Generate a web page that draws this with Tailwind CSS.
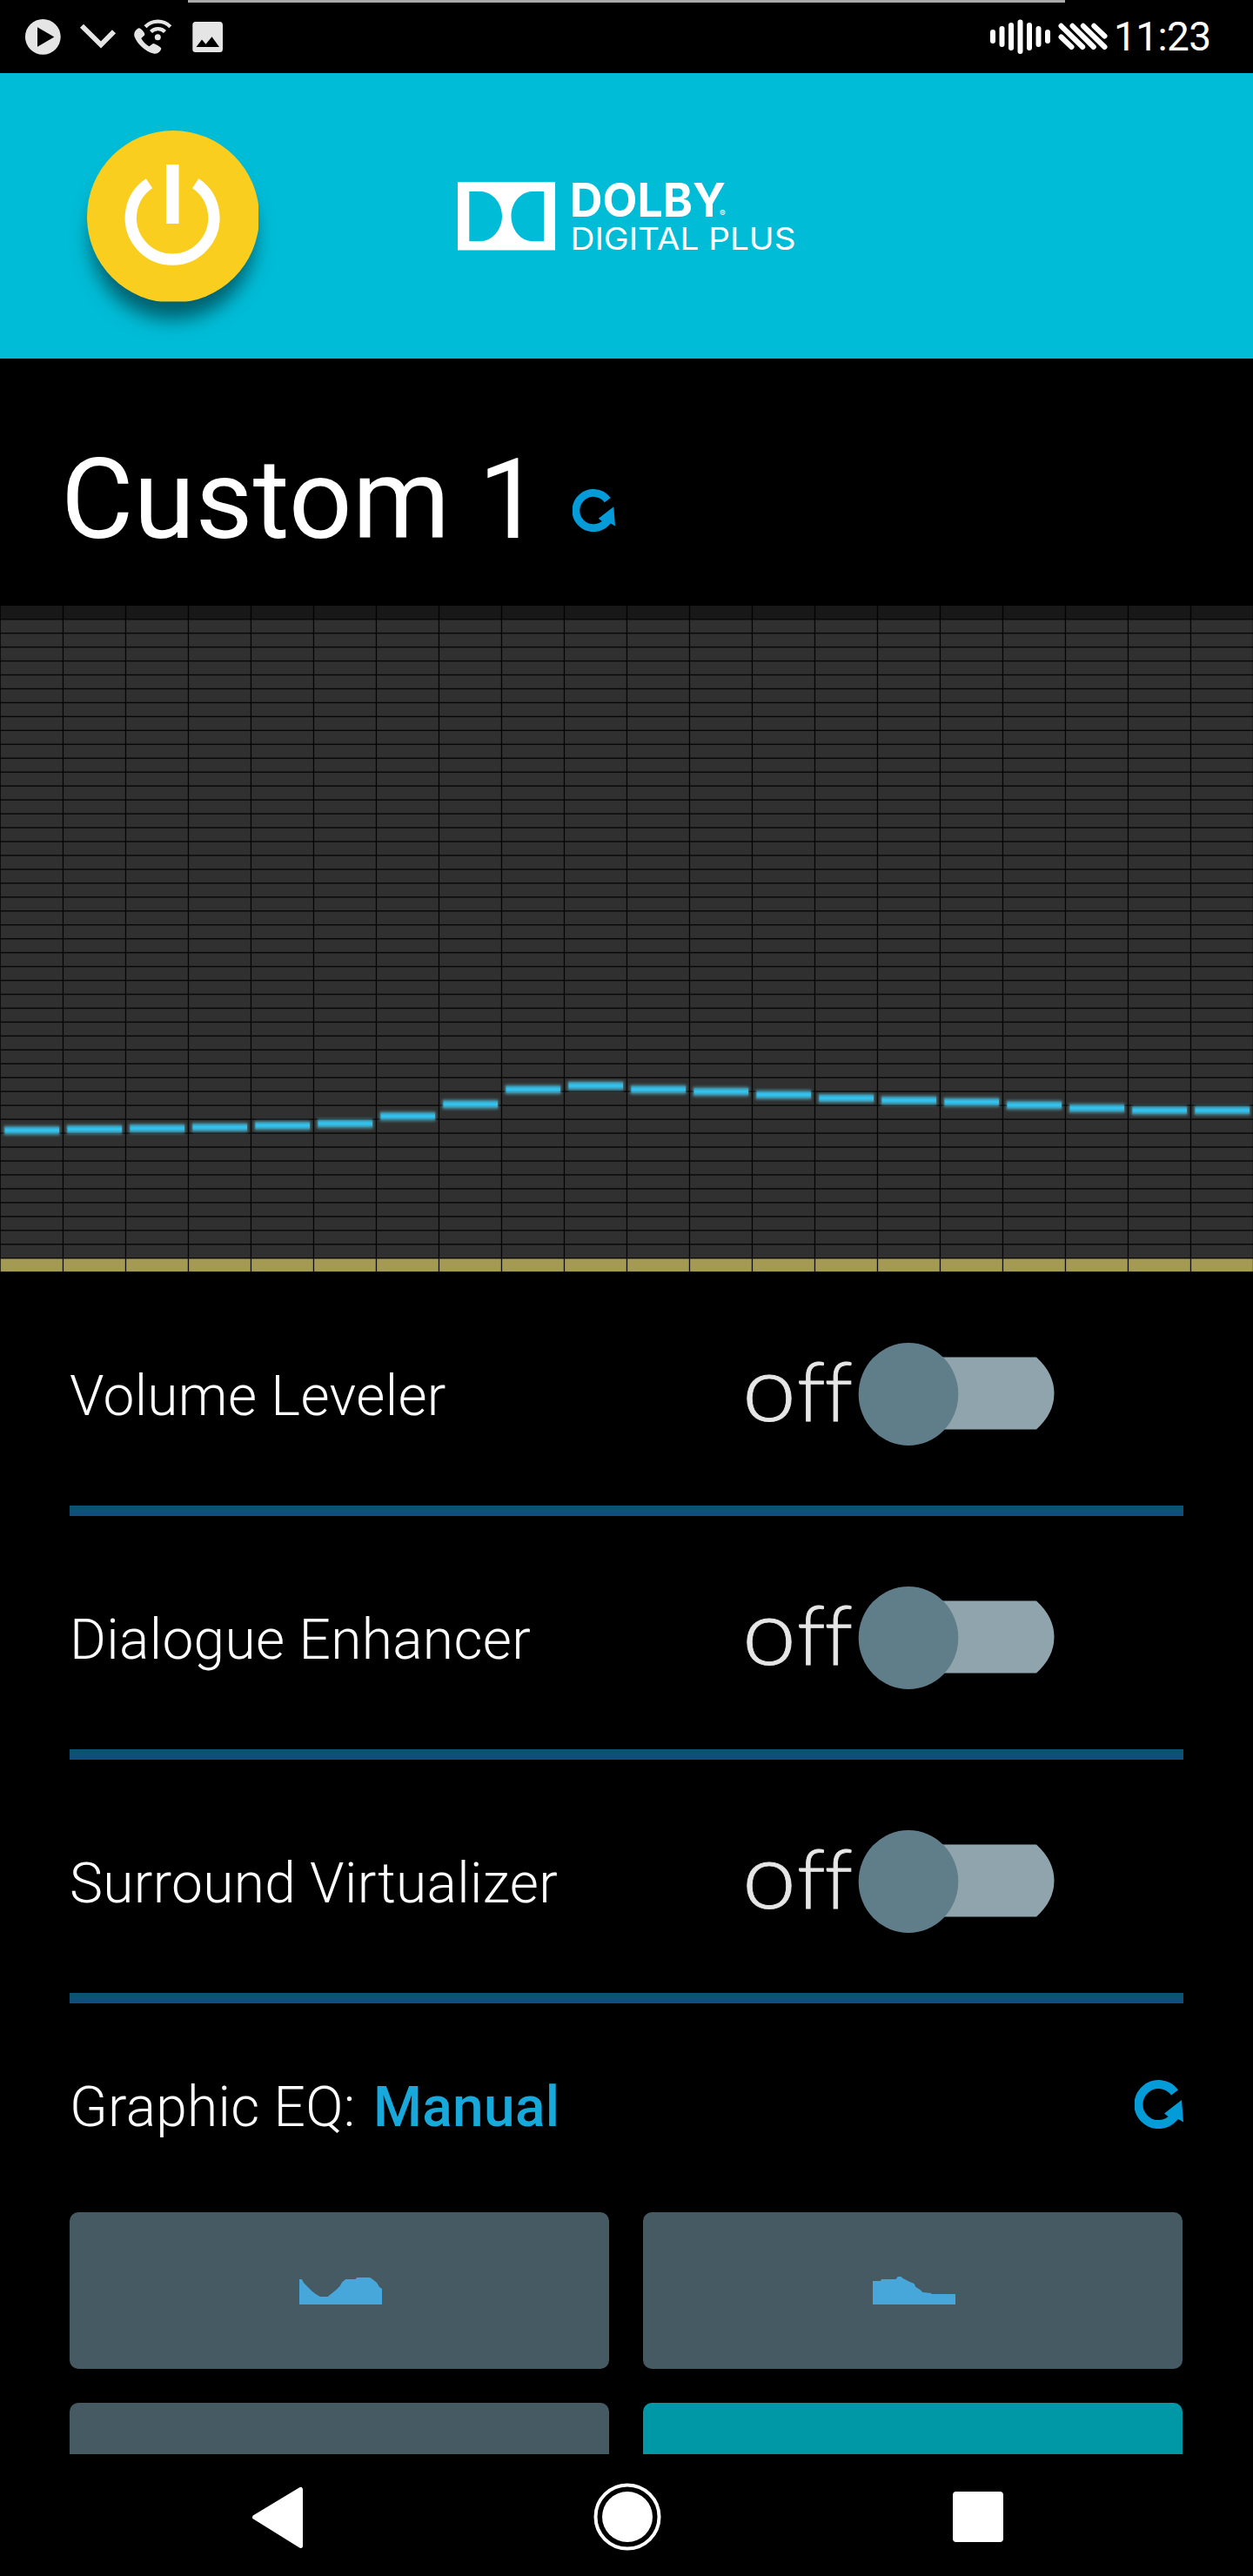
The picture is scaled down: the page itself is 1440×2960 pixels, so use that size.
<!DOCTYPE html>
<html lang="en">
<head>
<meta charset="utf-8">
<title>Dolby Digital Plus</title>
<script src="https://cdn.jsdelivr.net/npm/@tailwindcss/browser@4"></script>
</head>
<body class="bg-black">
<div class="flex h-[2960px] w-[1440px] flex-col overflow-hidden bg-black font-['Roboto',sans-serif] text-white">

  <!-- Status bar -->
  <header class="relative flex h-[84px] shrink-0 items-start justify-between">
    <div class="absolute top-0 left-[216px] h-[3px] w-[1008px] bg-[#a9a9a9]"></div>
    <svg class="h-[84px] w-[270px]" viewBox="0 0 270 84" fill="#e5e5e5">
      <circle cx="49.3" cy="42.3" r="20.4"/>
      <path d="M43 31.3 62.3 42.5 43 53.7Z" fill="#000"/>
      <path d="M94 29.7 116 51.5 131 36.2" fill="none" stroke="#e5e5e5" stroke-width="5.8"/>
      <path d="M159.5 32.3C155.5 34 153.5 38 154.5 42C157.500 50 167 59.500 176.500 61.500C181 62.500 185 59 185.300 55.500C185 54 178 49.700 176 49.900L171.500 53.200C168 51.500 164 47.500 162.300 44L166.300 40.300C167 38 162 32 159.500 32.300Z"/>
      <circle cx="181.300" cy="42.800" r="3.500"/>
      <path d="M173.500 36.500A11 11 0 0 1 189.500 36.500M167 30.800A20 20 0 0 1 195.800 30.800" fill="none" stroke="#e5e5e5" stroke-width="4.200"/>
      <rect x="221.300" y="25" width="34.700" height="35" rx="3.500"/>
      <path d="M225.500 54 232 45.500 236.500 50.800 243.500 42.300 252 54Z" fill="#000"/>
    </svg>
    <div class="flex pr-[49px]">
      <svg class="h-[84px] w-[144px]" viewBox="1134 0 144 84" fill="none" stroke="#fff" stroke-linecap="round" stroke-width="6">
        <path d="M1141 37V47M1151.500 33V51M1162 29V55M1172.500 25.500V59M1183 29V55M1193.500 33V51M1204 37V47"/>
        <path d="M1219.500 42.500 1231.500 54M1219.500 29.800 1244.200 54M1232.500 29.800 1256.800 54M1244.800 29.800 1269.500 54M1257.300 29.800 1269.500 41.500"/>
      </svg>
      <svg class="h-[84px] w-[113px] overflow-visible" viewBox="1278 0 113 84"><text x="1280" y="58.300" font-size="46" textLength="112" fill="#fff">11:23</text></svg>
    </div>
  </header>

  <!-- Brand bar -->
  <section class="h-[328px] shrink-0 bg-[#00bcd7]">
    <svg class="h-[328px] w-[1440px]" viewBox="0 84 1440 328">
      <defs>
        <filter id="shadow" x="-30%" y="-30%" width="160%" height="160%"><feGaussianBlur stdDeviation="11"/></filter>
        <clipPath id="button"><rect x="99" y="149" width="198" height="197.500"/></clipPath>
      </defs>
      <circle cx="198.500" cy="273" r="94" fill="#005f6c" filter="url(#shadow)"/>
      <circle cx="199" cy="249" r="99" fill="#f9ce1f" clip-path="url(#button)"/>
      <path d="M171.500 210.700A47.800 47.800 0 1 0 224.700 210.700" fill="none" stroke="#fff" stroke-width="13.300"/>
      <path d="M191 189H205.500V257H191Z" fill="#fff"/>
      <path fill="#fff" fill-rule="evenodd" d="M526 209.300H638V287.500H526ZM539.300 220V277.300H553C567 276 577 263 577 248.500S567 221 553 220ZM625 220V277.300H611C597 276 587.500 263 587.500 248.500S597 221 611 220Z"/>
      <g fill="#fff" font-family="Inter, sans-serif">
        <text x="655" y="249" font-size="53" font-weight="700" textLength="179" lengthAdjust="spacingAndGlyphs">DOLBY</text>
        <text x="827" y="249" font-size="10">®</text>
        <text x="655.500" y="287" font-size="36" font-weight="400" textLength="259" lengthAdjust="spacingAndGlyphs">DIGITAL PLUS</text>
      </g>
    </svg>
  </section>

  <!-- Profile title -->
  <section class="flex h-[284px] shrink-0 items-start pt-[98px] pl-[70px]">
    <h1 class="w-[588px] text-[128px] leading-none tracking-[0.3px] whitespace-nowrap">Custom 1</h1>
    <svg class="mt-[52px] h-[49px] w-[49px]" viewBox="0 0 56 56">
      <path d="M46 14.500A23 23 0 1 0 45 43" fill="none" stroke="#049bd9" stroke-width="10"/>
      <path d="M54 23 56 48.500 50 45 46 48 34 38.500Z" fill="#049bd9"/>
    </svg>
  </section>

  <!-- Equalizer curve -->
  <svg id="eq" class="h-[766px] w-[1440px] shrink-0" viewBox="0 0 1440 766">
    <defs>
      <filter id="soft" x="-10%" y="-60%" width="120%" height="220%"><feGaussianBlur stdDeviation="1.6"/></filter>
      <linearGradient id="core" x1="0" y1="0" x2="0" y2="1">
        <stop offset="0" stop-color="#33c1ee" stop-opacity=".15"/>
        <stop offset=".4" stop-color="#33c1ee"/>
        <stop offset=".6" stop-color="#33c1ee"/>
        <stop offset="1" stop-color="#33c1ee" stop-opacity=".15"/>
      </linearGradient>
    </defs>
    <rect width="1440" height="766" fill="#303030"/>
    <rect width="1440" height="15" fill="#181818"/>
    <rect y="750" width="1440" height="16" fill="#a49a53"/>
  </svg>

  <!-- Settings -->
  <main class="flex h-[1358px] shrink-0 flex-col overflow-hidden px-20">
    <div class="flex h-[280px] shrink-0 border-b-[12px] border-[#0e5177]">
      <span class="w-[772px] pt-[111px] text-[64px] leading-none font-light tracking-[0.35px] whitespace-nowrap">Volume Leveler</span>
      <svg class="mt-[78px] h-[130px] w-[360px] overflow-visible" viewBox="850 1540 360 130">
        <g font-family="Lato, sans-serif" font-weight="300" fill="#e6e6e6" stroke="#e6e6e6" stroke-width=".8">
          <text x="851" y="1632.500" font-size="104" textLength="62" lengthAdjust="spacingAndGlyphs">o</text>
          <text x="914 945.500" y="1632.500" font-size="95">ff</text>
        </g>
        <path d="M1040 1559.500H1189Q1209.500 1578 1209.500 1601T1189 1642.500H1040Z" fill="#90a4ad"/>
        <ellipse cx="1042" cy="1602" rx="57.300" ry="59" fill="#607d8a"/>
      </svg>
    </div>
    <div class="flex h-[280px] shrink-0 border-b-[12px] border-[#0e5177]">
      <span class="w-[772px] pt-[111px] text-[64px] leading-none font-light tracking-[0.35px] whitespace-nowrap">Dialogue Enhancer</span>
      <svg class="mt-[78px] h-[130px] w-[360px] overflow-visible" viewBox="850 1540 360 130">
        <g font-family="Lato, sans-serif" font-weight="300" fill="#e6e6e6" stroke="#e6e6e6" stroke-width=".8">
          <text x="851" y="1632.500" font-size="104" textLength="62" lengthAdjust="spacingAndGlyphs">o</text>
          <text x="914 945.500" y="1632.500" font-size="95">ff</text>
        </g>
        <path d="M1040 1559.500H1189Q1209.500 1578 1209.500 1601T1189 1642.500H1040Z" fill="#90a4ad"/>
        <ellipse cx="1042" cy="1602" rx="57.300" ry="59" fill="#607d8a"/>
      </svg>
    </div>
    <div class="flex h-[280px] shrink-0 border-b-[12px] border-[#0e5177]">
      <span class="w-[772px] pt-[111px] text-[64px] leading-none font-light tracking-[0.35px] whitespace-nowrap">Surround Virtualizer</span>
      <svg class="mt-[78px] h-[130px] w-[360px] overflow-visible" viewBox="850 1540 360 130">
        <g font-family="Lato, sans-serif" font-weight="300" fill="#e6e6e6" stroke="#e6e6e6" stroke-width=".8">
          <text x="851" y="1632.500" font-size="104" textLength="62" lengthAdjust="spacingAndGlyphs">o</text>
          <text x="914 945.500" y="1632.500" font-size="95">ff</text>
        </g>
        <path d="M1040 1559.500H1189Q1209.500 1578 1209.500 1601T1189 1642.500H1040Z" fill="#90a4ad"/>
        <ellipse cx="1042" cy="1602" rx="57.300" ry="59" fill="#607d8a"/>
      </svg>
    </div>

    <div class="flex h-[240px] shrink-0 items-start justify-between pt-[88px]">
      <div class="flex text-[64px] leading-none tracking-[0.3px] whitespace-nowrap">
        <span class="w-[349px] font-light">Graphic EQ:</span>
        <span class="font-medium text-[#17a9dc]">Manual</span>
      </div>
      <svg class="h-14 w-14" viewBox="0 0 56 56">
        <path d="M46 14.500A23 23 0 1 0 45 43" fill="none" stroke="#049bd9" stroke-width="10"/>
        <path d="M54 23 56 48.500 50 45 46 48 34 38.500Z" fill="#049bd9"/>
      </svg>
    </div>

    <div class="grid grid-cols-[620px_620px] gap-x-[39px] gap-y-[39px]">
      <div class="flex h-[180px] items-center justify-center rounded-[10px] bg-[#465a64]">
        <svg class="ml-[2px] h-[32px] w-[95px]" viewBox="0 0 96 32" preserveAspectRatio="none" fill="#47a7db"><path d="M0 3H3L5 7 10 12 15 17 19 20 24 23H33L38 19 43 15 47 11 50 6 54 3H65L67 1H82L85 3 90 7 93 12 96 14V32H0Z"/></svg>
      </div>
      <div class="flex h-[180px] items-center justify-center rounded-[10px] bg-[#465a64]">
        <svg class="ml-[2px] h-[32px] w-[95px]" viewBox="0 0 96 32" preserveAspectRatio="none" fill="#47a7db"><path d="M0 5H9L10 3H27L29 0H33L35 2 39 4 43 6 48 8 50 12 55 15 58 18 68 19V20H96V32H0Z"/></svg>
      </div>
      <div class="h-[180px] rounded-[10px] bg-[#465a64]"></div>
      <div class="h-[180px] rounded-[10px] bg-[#0097a7]"></div>
    </div>
  </main>

  <!-- Navigation bar -->
  <nav class="h-[140px] shrink-0 bg-black">
    <svg class="h-[140px] w-[1440px]" viewBox="0 2820 1440 140" fill="#fff">
      <path d="M292.500 2892.500 345.500 2860.500V2925.500Z" stroke="#fff" stroke-width="5" stroke-linejoin="round"/>
      <circle cx="721" cy="2892" r="36.500" fill="none" stroke="#fff" stroke-width="4"/>
      <circle cx="721" cy="2892" r="29"/>
      <rect x="1095" y="2863" width="58" height="58" rx="4"/>
    </svg>
  </nav>
</div>
<script>
  const eq = document.getElementById('eq');
  const add = (name, attrs) => {
    const el = document.createElementNS('http://www.w3.org/2000/svg', name);
    for (const key in attrs) el.setAttribute(key, attrs[key]);
    eq.appendChild(el);
  };
  for (let row = 1; row <= 48; row++)
    add('rect', { x: 0, y: row * 15.958 - 1, width: 1440, height: 1.4, fill: '#000', 'fill-opacity': 0.85 });
  for (let col = 0; col <= 20; col++)
    add('rect', { x: col * 72 - (col ? 0.2 : 0.5), y: 0, width: 1.3, height: 766, fill: '#000', 'fill-opacity': 0.9 });
  [603, 601.7, 600.7, 599.5, 597.5, 595.2, 586.7, 573, 556, 551.7, 556, 558.5, 562, 566, 568.5, 570.5, 574, 577.5, 580, 580].forEach((y, i) => {
    add('rect', { x: i * 72 + 4, y: y - 5.8, width: 65, height: 11.5, rx: 2, fill: '#4a98aa', 'fill-opacity': 0.75, filter: 'url(#soft)' });
    add('rect', { x: i * 72 + 5.5, y: y - 4.7, width: 62.5, height: 9, fill: 'url(#core)' });
  });
</script>
</body>
</html>
